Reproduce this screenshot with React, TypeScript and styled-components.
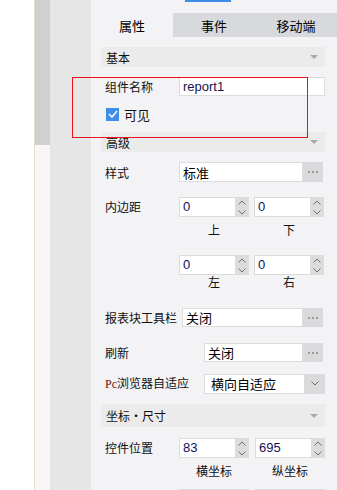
import styled, { createGlobalStyle } from "styled-components";

const GlobalStyle = createGlobalStyle`
    html, body {
        margin: 0;
        padding: 0;
        background: #fff;
    }
    body {
        font-family: "Noto Sans CJK SC", "Liberation Sans", sans-serif;
        font-size: 12px;
        color: #111;
    }
`;

const Page = styled.div`
    display: flex;
    height: 490px;
    overflow: hidden;
`;

const Blank = styled.div`
    width: 34px;
    background: #fff;
`;

const ScrollTrack = styled.div`
    width: 15px;
    border-left: 1px solid #e6dccd;
    background: #f8f7f5;
    display: flex;
    flex-direction: column;
`;

const ScrollThumb = styled.div`
    height: 145px;
    flex-shrink: 0;
    background: #d0d0d0;
`;

const Gutter = styled.div`
    width: 41px;
    background: #e6e6e6;
`;

const Panel = styled.div`
    position: relative;
    flex: 1;
    background: #f3f3f5;
    display: flex;
    flex-direction: column;
    & > * {
        flex-shrink: 0;
    }
`;

const TopStrip = styled.div`
    height: 13px;
    display: flex;
    align-items: flex-start;
`;

const BlueMark = styled.div`
    margin-left: 94px;
    width: 46px;
    height: 2px;
    background: #3d8ee8;
`;

const TabBar = styled.div`
    display: grid;
    grid-template-columns: 82px 82px 1fr;
    height: 24px;
`;

const TabItem = styled.div<{ $active?: boolean }>`
    display: flex;
    align-items: center;
    justify-content: center;
    font-size: 13px;
    background: ${p => p.$active ? "#f3f3f5" : "#d8d9dc"};
    color: #000;
`;

const Content = styled.div`
    padding: 0 12px 0 10px;
    display: flex;
    flex-direction: column;
`;

const SectionHead = styled.div<{ $top: number; $h?: number }>`
    margin-top: ${p => p.$top}px;
    height: ${p => p.$h ?? 20}px;
    background: #ebebeb;
    display: flex;
    align-items: center;
    justify-content: space-between;
    padding: 0 7px 0 5px;
`;

const Caret = styled.span`
    width: 0;
    height: 0;
    border-left: 4px solid transparent;
    border-right: 4px solid transparent;
    border-top: 4px solid #a9a9a9;
`;

const Row = styled.div<{ $top: number; $label: number; $align?: string }>`
    margin-top: ${p => p.$top}px;
    display: grid;
    grid-template-columns: ${p => p.$label}px 1fr;
    align-items: ${p => p.$align ?? "center"};
    padding-left: 4px;
`;

const Label = styled.div`
    white-space: nowrap;
    line-height: 19px;
`;

const Field = styled.div<{ $h?: number; $mr?: number }>`
    display: flex;
    height: ${p => p.$h ?? 19}px;
    margin-right: ${p => p.$mr ?? 0}px;
`;

const TextBox = styled.div<{ $color?: string; $pl?: number }>`
    flex: 1;
    background: #fff;
    border: 1px solid #dcdcdc;
    padding: 0 3px 0 ${p => p.$pl ?? 3}px;
    display: flex;
    align-items: center;
    font-size: 13px;
    color: ${p => p.$color ?? "#000"};
    font-family: "Liberation Sans", "Noto Sans CJK SC", sans-serif;
`;

const DotsBtn = styled.div`
    width: 20px;
    background: #dadadc;
    display: flex;
    align-items: center;
    justify-content: center;
    gap: 2px;
`;

const Dot = styled.span`
    width: 2px;
    height: 2px;
    background: #9a9a9a;
`;

const SelectBtn = styled.div`
    width: 20px;
    background: #dadadc;
    display: flex;
    align-items: center;
    justify-content: center;
`;

const CheckRow = styled.div`
    margin-top: 10px;
    height: 16px;
    display: flex;
    align-items: center;
    gap: 5px;
    padding-left: 5px;
    font-size: 13px;
`;

const CheckBox = styled.div`
    width: 13px;
    height: 13px;
    background: #3d8ee8;
    display: flex;
    align-items: center;
    justify-content: center;
`;

const PairGrid = styled.div<{ $top?: number; $gap?: number }>`
    margin-top: ${p => p.$top ?? 0}px;
    display: grid;
    grid-template-columns: 70px 70px;
    column-gap: ${p => p.$gap ?? 5}px;
`;

const Spinner = styled.div`
    display: flex;
    height: 20px;
`;

const SpinInput = styled.div`
    flex: 1;
    background: #fff;
    border: 1px solid #dcdcdc;
    border-right: none;
    padding: 0 3px;
    line-height: 18px;
    font-size: 13px;
    color: #10105a;
    font-family: "Liberation Sans", sans-serif;
`;

const SpinArrows = styled.div`
    width: 14px;
    background: #dcdcdc;
    display: flex;
    flex-direction: column;
    align-items: center;
    justify-content: space-around;
`;

const Caption = styled.div<{ $top?: number }>`
    margin-top: ${p => p.$top ?? 4}px;
    text-align: center;
    line-height: 18px;
`;

const PcMark = styled.span`
    font-family: "Liberation Serif", serif;
    color: #6b0f0f;
`;

const Highlight = styled.div`
    position: absolute;
    left: -19px;
    top: 77px;
    width: 234px;
    height: 59px;
    border: 1px solid #e8121c;
    pointer-events: none;
`;

const Chevron = ({ up }: { up?: boolean }) => (
	<svg width="8" height="5" viewBox="0 0 8 5">
		<path d={up ? "M0.5 4.5 L4 1 L7.5 4.5" : "M0.5 0.5 L4 4 L7.5 0.5"} fill="none" stroke="#6e6e6e" strokeWidth="1" />
	</svg>
);

const SpinField = ({ value }: { value: string }) => (
	<Spinner>
		<SpinInput>{value}</SpinInput>
		<SpinArrows>
			<Chevron up />
			<Chevron />
		</SpinArrows>
	</Spinner>
);

const Dots = () => (
	<DotsBtn><Dot /><Dot /><Dot /></DotsBtn>
);

export default function App() {
	return <Page>
		<GlobalStyle />
		<Blank />
		<ScrollTrack><ScrollThumb /></ScrollTrack>
		<Gutter />
		<Panel>
			<TopStrip><BlueMark /></TopStrip>
			<TabBar>
				<TabItem $active>属性</TabItem>
				<TabItem>事件</TabItem>
				<TabItem>移动端</TabItem>
			</TabBar>
			<Content>
				<SectionHead $top={10}>基本<Caret /></SectionHead>

				<Row $top={10} $label={74}>
					<Label>组件名称</Label>
					<Field><TextBox $color="#14144e">report1</TextBox></Field>
				</Row>

				<CheckRow>
					<CheckBox>
						<svg width="10" height="8" viewBox="0 0 10 8">
							<path d="M1 4 L4 7 L9 1" fill="none" stroke="#fff" strokeWidth="1.6" />
						</svg>
					</CheckBox>
					可见
				</CheckRow>

				<SectionHead $top={10}>高级<Caret /></SectionHead>

				<Row $top={10} $label={74}>
					<Label>样式</Label>
					<Field $h={20} $mr={2}><TextBox>标准</TextBox><Dots /></Field>
				</Row>

				<Row $top={15} $label={74} $align="start">
					<Label>内边距</Label>
					<div>
						<PairGrid>
							<SpinField value="0" />
							<SpinField value="0" />
							<Caption>上</Caption>
							<Caption>下</Caption>
						</PairGrid>
						<PairGrid $top={16}>
							<SpinField value="0" />
							<SpinField value="0" />
							<Caption $top={-2}>左</Caption>
							<Caption $top={-2}>右</Caption>
						</PairGrid>
					</div>
				</Row>

				<Row $top={17} $label={77}>
					<Label>报表块工具栏</Label>
					<Field $mr={2}><TextBox>关闭</TextBox><Dots /></Field>
				</Row>

				<Row $top={16} $label={99}>
					<Label>刷新</Label>
					<Field $mr={2}><TextBox>关闭</TextBox><Dots /></Field>
				</Row>

				<Row $top={11} $label={99}>
					<Label><PcMark>Pc</PcMark>浏览器自适应</Label>
					<Field $h={20}>
						<TextBox $pl={6}>横向自适应</TextBox>
						<SelectBtn><Chevron /></SelectBtn>
					</Field>
				</Row>

				<SectionHead $top={10} $h={23}>坐标・尺寸<Caret /></SectionHead>

				<Row $top={11} $label={74} $align="start">
					<Label>控件位置</Label>
					<div>
						<PairGrid $gap={6}>
							<SpinField value="83" />
							<SpinField value="695" />
							<Caption>横坐标</Caption>
							<Caption>纵坐标</Caption>
						</PairGrid>
						<PairGrid $top={9} $gap={6}>
							<SpinField value="" />
							<SpinField value="" />
						</PairGrid>
					</div>
				</Row>
			</Content>
			<Highlight />
		</Panel>
	</Page>;
}
